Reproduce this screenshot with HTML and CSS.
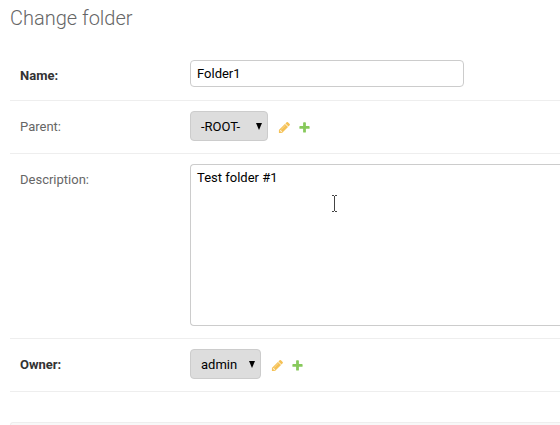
FILE: index.html
```html
<!DOCTYPE html>
<html lang="en">
<head>
<meta charset="utf-8">
<title>Change folder</title>
<link rel="stylesheet" href="styles.css">
</head>
<body>
<svg class="defs" width="0" height="0">
<symbol id="pencil" viewBox="0 0 1792 1792"><path class="pencil-core" d="M906 416l416 416-832 832h-416v-416z" transform="translate(54)"/><path d="M491 1536l91-91-235-235-91 91v107h128v128h107zm523-928q0-22-22-22-10 0-17 7l-542 542q-7 7-7 17 0 22 22 22 10 0 17-7l542-542q7-7 7-17zm-54-192l416 416-832 832h-416v-416zm683 96q0 53-37 90l-166 166-416-416 166-165q36-38 90-38 53 0 91 38l235 234q37 39 37 91z"/></symbol>
<symbol id="plus" viewBox="0 0 1792 1792"><path d="M1600 796v192q0 40-28 68t-68 28h-416v416q0 40-28 68t-68 28h-192q-40 0-68-28t-28-68v-416h-416q-40 0-68-28t-28-68v-192q0-40 28-68t68-28h416v-416q0-40 28-68t68-28h192q40 0 68 28t28 68v416h416q40 0 68 28t28 68z"/></symbol>
</svg>
<main class="content">
<h1>Change folder</h1>
<form>
<div class="row row-name"><label class="required">Name:</label><div class="text-input">Folder1</div></div>
<div class="row row-select"><label>Parent:</label><div class="select parent"><span>-ROOT-</span><svg class="arrow" viewBox="0 0 6 7"><path d="M0 0h6L3 7z"/></svg></div><svg class="icon change"><use href="#pencil"/></svg><svg class="icon add"><use href="#plus"/></svg></div>
<div class="row row-description"><label>Description:</label><div class="textarea">Test folder #1</div></div>
<div class="row row-select"><label class="required">Owner:</label><div class="select owner"><span>admin</span><svg class="arrow" viewBox="0 0 6 7"><path d="M0 0h6L3 7z"/></svg></div><svg class="icon change"><use href="#pencil"/></svg><svg class="icon add"><use href="#plus"/></svg></div>
<div class="submit-row"></div>
</form>
</main>
<svg class="cursor" viewBox="0 0 7 18"><path d="M1 .5h2M4 .5h2M3.5 1v15M1 16.5h2M4 16.5h2"/></svg>
</body>
</html>
```
FILE: styles.css
```css
* { box-sizing: border-box; }
body {
  margin: 0;
  height: 425px;
  overflow: hidden;
  background: #fff;
  color: #333;
  font: 13px/15px Roboto, sans-serif;
}
.defs { position: absolute; }
.content { padding-left: 10px; }
h1 {
  height: 50px;
  margin: 0;
  padding-top: 7px;
  color: #666;
  font-size: 20px;
  font-weight: 300;
  line-height: 22px;
}
.row {
  display: flex;
  align-items: flex-start;
  padding: 10px 0 0 10px;
  border-bottom: 1px solid #eee;
}
.row-name { height: 51px; }
.row-select { height: 53px; }
.row-description { height: 185px; }
label {
  flex: 0 0 170px;
  padding-top: 8px;
  color: #666;
}
.required { color: #333; font-weight: 700; }
.text-input, .textarea, .select {
  flex: none;
  border: 1px solid #ccc;
  border-radius: 4px;
  color: #000;
}
.text-input { width: 274px; height: 27px; padding: 5px 6px; }
.textarea {
  flex: 1;
  height: 162px;
  padding: 5px 6px;
  border-right: 0;
  border-radius: 4px 0 0 4px;
}
.select {
  display: flex;
  align-items: center;
  justify-content: space-between;
  height: 30px;
  padding: 0 5px 0 10px;
  background: #ddd;
}
.parent { width: 78px; }
.owner { width: 71px; }
.arrow { width: 6px; height: 7px; }
.icon { flex: none; width: 13px; height: 13px; margin-top: 10px; }
.change { margin-left: 10px; fill: #f5c155; }
.pencil-core { fill: #fdf0d4; }
.add { margin-left: 7px; fill: #87c95b; }
.submit-row {
  height: 3px;
  margin-top: 30px;
  background: #f8f8f8;
  border-top: 1px solid #eee;
  border-left: 1px solid #eee;
  border-radius: 4px 0 0 0;
}
.cursor {
  position: absolute;
  left: 331px;
  top: 195px;
  width: 7px;
  height: 18px;
  fill: none;
  stroke: #444;
}
```
